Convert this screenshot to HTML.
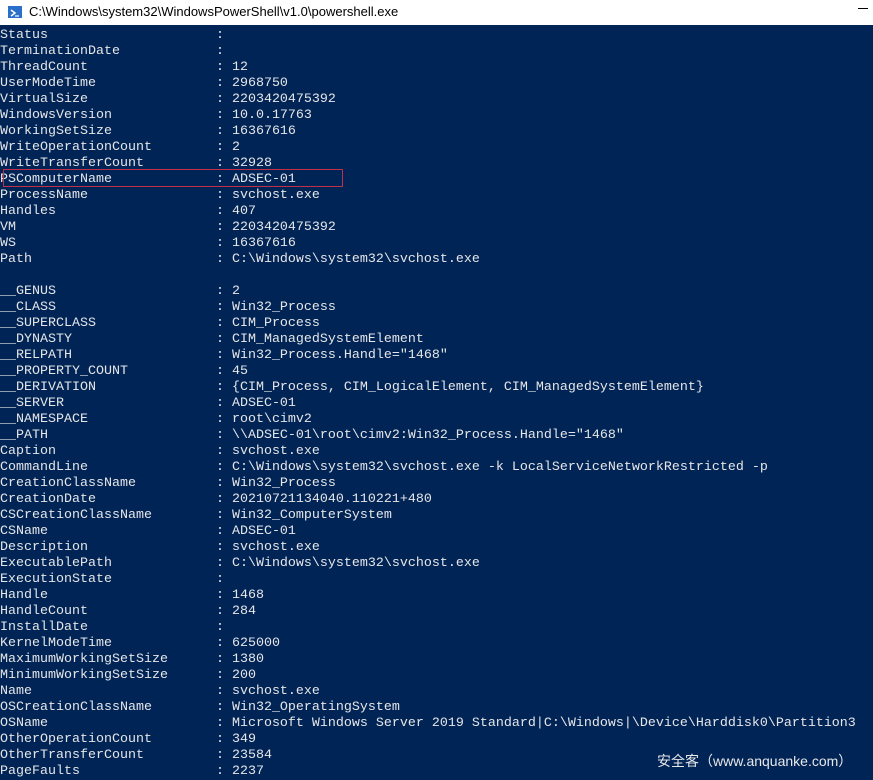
<!DOCTYPE html>
<html><head><meta charset="utf-8"><style>
html,body{margin:0;padding:0;width:873px;height:779px;overflow:hidden;background:#012456;}
#title{position:absolute;left:0;top:0;width:873px;height:25px;background:#fff;}
#title span{position:absolute;left:29px;top:4px;font:13px "Liberation Sans",sans-serif;color:#000;}
#icon{position:absolute;left:8px;top:6px;width:14px;height:12px;background:#2a6fc9;}
#min{position:absolute;left:858px;top:8px;width:10px;height:1px;background:#000;}
pre{position:absolute;left:0;top:28px;margin:0;font:13.33px/16px "Liberation Mono",monospace;color:#e6e6e6;}
#box{position:absolute;left:3px;top:169px;width:338px;height:16px;border:1.5px solid #c0304a;}
#wm{position:absolute;left:657px;top:751px;font:14px "Liberation Sans","Noto Sans CJK SC",sans-serif;color:#e8e8e8;}
</style></head><body>
<div id="title"><div id="icon"><svg width="14" height="12"><path d="M3 3 L7 6 L3 9" stroke="#fff" stroke-width="1.5" fill="none"/><path d="M7 9 H11" stroke="#fff" stroke-width="1.2"/></svg></div><span>C:\Windows\system32\WindowsPowerShell\v1.0\powershell.exe</span><div id="min"></div></div>
<pre>Status                     :
TerminationDate            :
ThreadCount                : 12
UserModeTime               : 2968750
VirtualSize                : 2203420475392
WindowsVersion             : 10.0.17763
WorkingSetSize             : 16367616
WriteOperationCount        : 2
WriteTransferCount         : 32928
PSComputerName             : ADSEC-01
ProcessName                : svchost.exe
Handles                    : 407
VM                         : 2203420475392
WS                         : 16367616
Path                       : C:\Windows\system32\svchost.exe

__GENUS                    : 2
__CLASS                    : Win32_Process
__SUPERCLASS               : CIM_Process
__DYNASTY                  : CIM_ManagedSystemElement
__RELPATH                  : Win32_Process.Handle="1468"
__PROPERTY_COUNT           : 45
__DERIVATION               : {CIM_Process, CIM_LogicalElement, CIM_ManagedSystemElement}
__SERVER                   : ADSEC-01
__NAMESPACE                : root\cimv2
__PATH                     : \\ADSEC-01\root\cimv2:Win32_Process.Handle="1468"
Caption                    : svchost.exe
CommandLine                : C:\Windows\system32\svchost.exe -k LocalServiceNetworkRestricted -p
CreationClassName          : Win32_Process
CreationDate               : 20210721134040.110221+480
CSCreationClassName        : Win32_ComputerSystem
CSName                     : ADSEC-01
Description                : svchost.exe
ExecutablePath             : C:\Windows\system32\svchost.exe
ExecutionState             :
Handle                     : 1468
HandleCount                : 284
InstallDate                :
KernelModeTime             : 625000
MaximumWorkingSetSize      : 1380
MinimumWorkingSetSize      : 200
Name                       : svchost.exe
OSCreationClassName        : Win32_OperatingSystem
OSName                     : Microsoft Windows Server 2019 Standard|C:\Windows|\Device\Harddisk0\Partition3
OtherOperationCount        : 349
OtherTransferCount         : 23584
PageFaults                 : 2237</pre>
<div id="box"></div>
<div id="wm">安全客（www.anquanke.com）</div>
</body></html>
